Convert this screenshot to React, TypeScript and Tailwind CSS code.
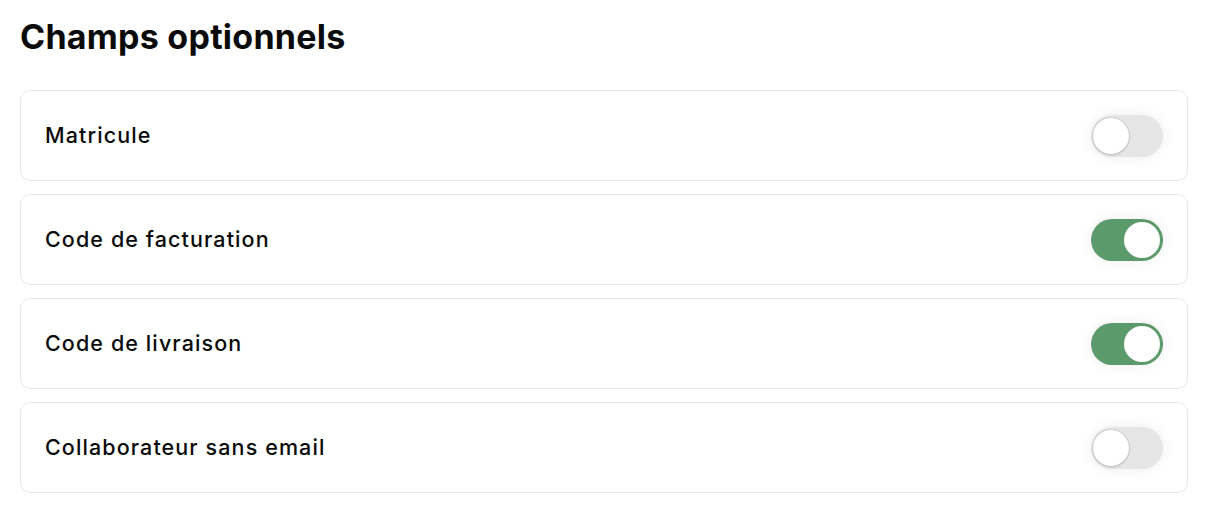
import React from "react";

const items = [
  { label: "Matricule", on: false },
  { label: "Code de facturation", on: true },
  { label: "Code de livraison", on: true },
  { label: "Collaborateur sans email", on: false },
];

function Toggle({ on }: { on: boolean }) {
  return (
    <div
      className={
        "flex h-[42px] w-[72px] items-center rounded-full p-[3px] shadow-[0_0_12px_rgba(0,0,0,0.08)] " +
        (on ? "justify-end bg-[#5b9a6b]" : "justify-start bg-[#e6e6e6]")
      }
    >
      <div
        className={
          "h-[36px] w-[36px] rounded-full bg-white " +
          (on ? "" : "shadow-[0_0_0_1px_rgba(0,0,0,0.08),0_1px_3px_rgba(0,0,0,0.15)] ml-[-1px]")
        }
      />
    </div>
  );
}

export default function App() {
  return (
    <div className="min-h-[520px] bg-white px-5 pt-[15px] font-['Inter',sans-serif] text-[#0a0a0a]">
      <h1 className="text-[34px] leading-[44px] font-bold tracking-[0.25px]">Champs optionnels</h1>
      <div className="mt-[31px] flex flex-col gap-[13px]">
        {items.map((it) => (
          <div
            key={it.label}
            className="flex h-[91px] items-center justify-between rounded-[10px] border border-[#e7e7e7] px-6"
          >
            <span className="text-[21.5px] font-medium tracking-[1.1px]">{it.label}</span>
            <Toggle on={it.on} />
          </div>
        ))}
      </div>
    </div>
  );
}
